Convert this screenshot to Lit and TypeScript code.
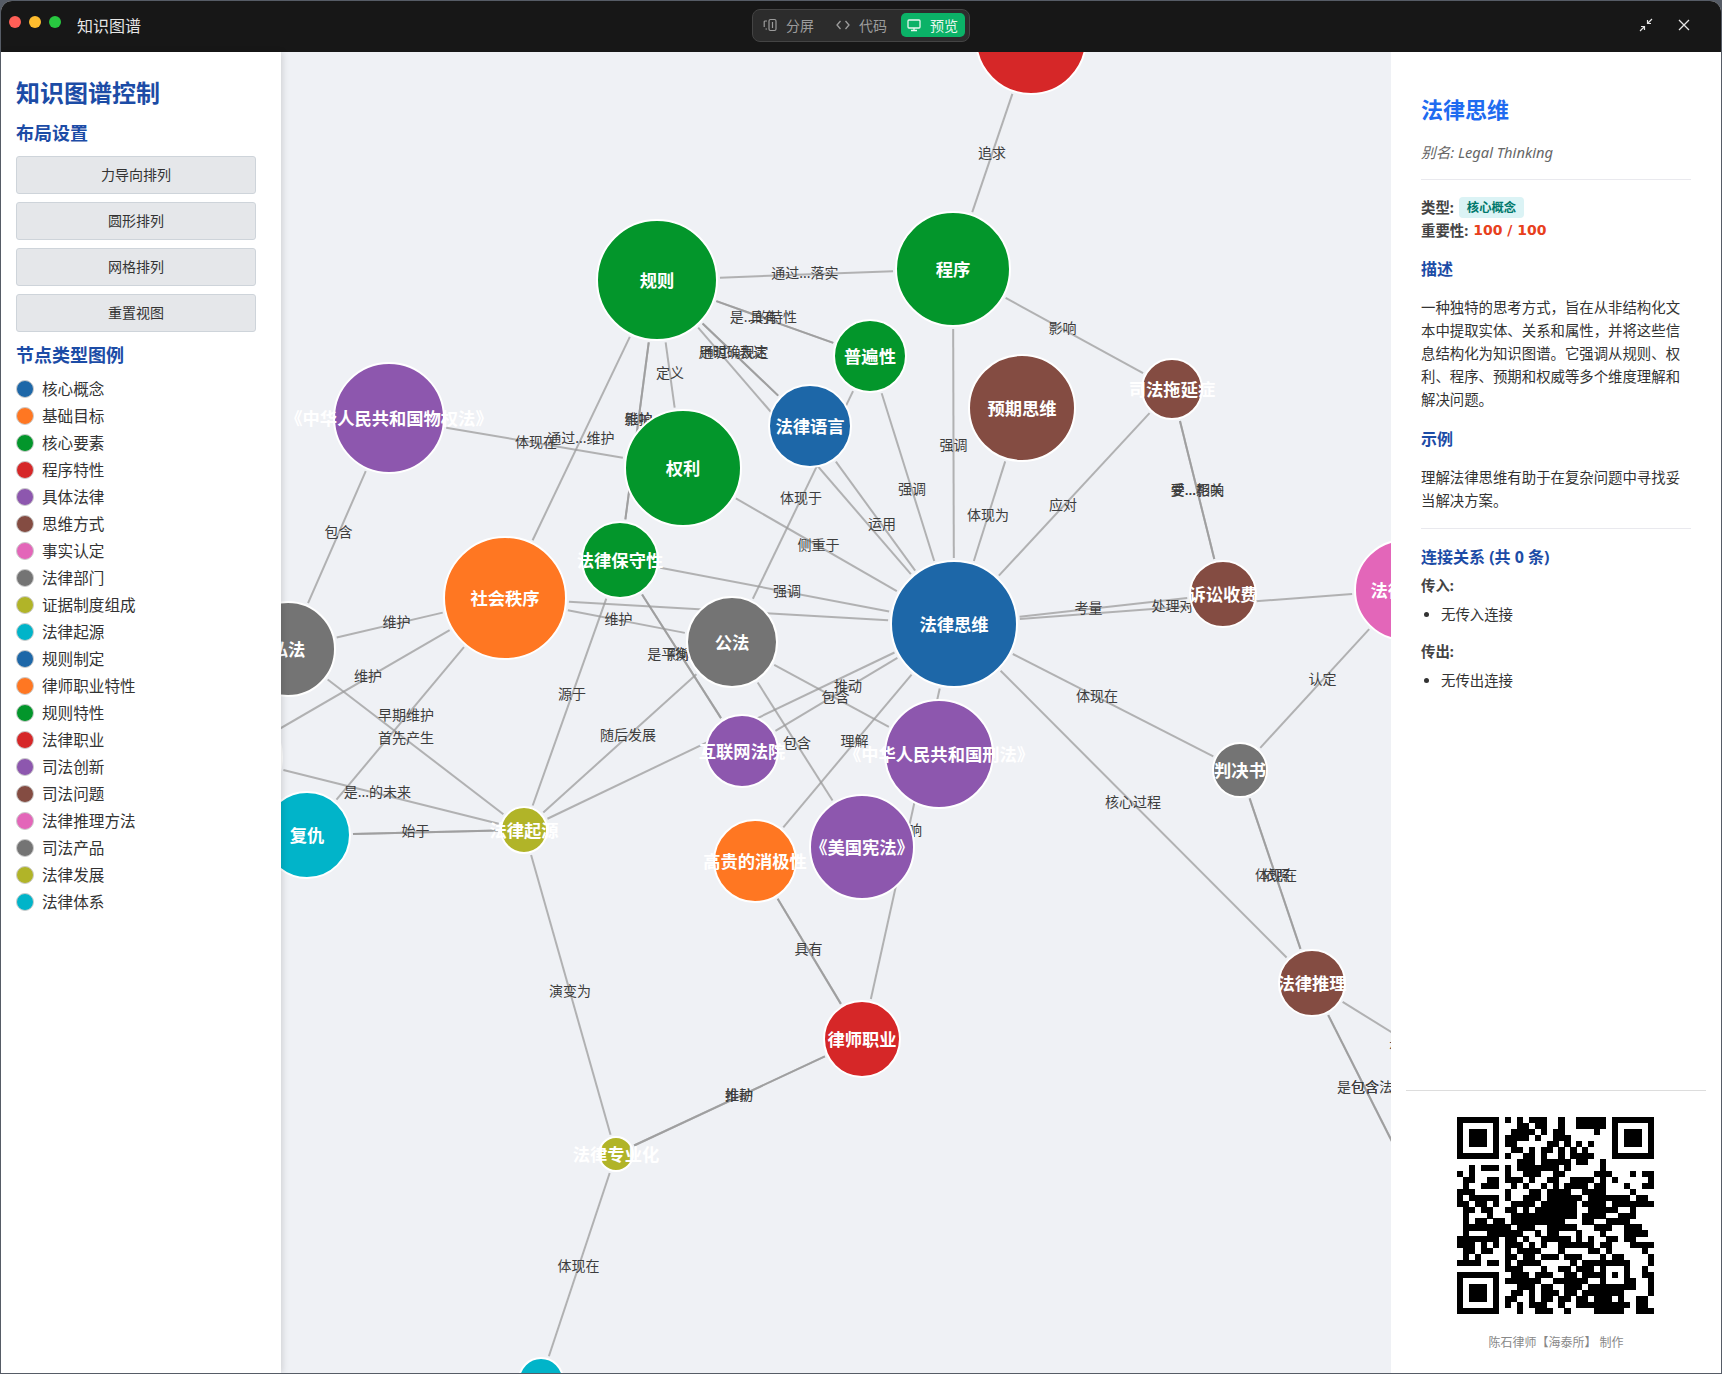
import { LitElement, html, css, svg } from "lit";
import { customElement } from "lit/decorators.js";

const C = {
  blue: "#1d67a8", orange: "#ff7722", green: "#03962b", red: "#d62728", purple: "#8d57ae",
  brown: "#844c42", pink: "#e366b9", gray: "#747474", olive: "#b1b428", cyan: "#01b4c9",
};

const LEGEND: [string, string][] = [
  ["核心概念", C.blue], ["基础目标", C.orange], ["核心要素", C.green], ["程序特性", C.red],
  ["具体法律", C.purple], ["思维方式", C.brown], ["事实认定", C.pink], ["法律部门", C.gray],
  ["证据制度组成", C.olive], ["法律起源", C.cyan], ["规则制定", C.blue], ["律师职业特性", C.orange],
  ["规则特性", C.green], ["法律职业", C.red], ["司法创新", C.purple], ["司法问题", C.brown],
  ["法律推理方法", C.pink], ["司法产品", C.gray], ["法律发展", C.olive], ["法律体系", C.cyan],
];

type N = { x: number; y: number; r: number; c: string; t: string };
const NODES: Record<string, N> = {
  off: { x: 231, y: 757, r: 51, c: C.gray, t: "" },
  top: { x: 1031, y: 39, r: 55, c: C.red, t: "" },
  siwei: { x: 954, y: 624, r: 63, c: C.blue, t: "法律思维" },
  guize: { x: 657, y: 280, r: 60, c: C.green, t: "规则" },
  chengxu: { x: 953, y: 269, r: 57, c: C.green, t: "程序" },
  pubian: { x: 870, y: 356, r: 36, c: C.green, t: "普遍性" },
  yuyan: { x: 810, y: 426, r: 41, c: C.blue, t: "法律语言" },
  quanli: { x: 683, y: 468, r: 58, c: C.green, t: "权利" },
  wuquan: { x: 389, y: 418, r: 55, c: C.purple, t: "《中华人民共和国物权法》" },
  baoshou: { x: 620, y: 560, r: 38, c: C.green, t: "法律保守性" },
  shehui: { x: 505, y: 598, r: 61, c: C.orange, t: "社会秩序" },
  gongfa: { x: 732, y: 642, r: 45, c: C.gray, t: "公法" },
  sifa: { x: 288, y: 649, r: 47, c: C.gray, t: "私法" },
  yuqi: { x: 1022, y: 408, r: 53, c: C.brown, t: "预期思维" },
  tuoyan: { x: 1172, y: 389, r: 30, c: C.brown, t: "司法拖延症" },
  susong: { x: 1223, y: 594, r: 33, c: C.brown, t: "诉讼收费" },
  shishi: { x: 1405, y: 590, r: 50, c: C.pink, t: "法律事实" },
  hulian: { x: 742, y: 751, r: 36, c: C.purple, t: "互联网法院" },
  xingfa: { x: 939, y: 754, r: 54, c: C.purple, t: "《中华人民共和国刑法》" },
  xianfa: { x: 862, y: 847, r: 52, c: C.purple, t: "《美国宪法》" },
  gaogui: { x: 755, y: 861, r: 41, c: C.orange, t: "高贵的消极性" },
  panjue: { x: 1240, y: 770, r: 27, c: C.gray, t: "判决书" },
  qiyuan: { x: 524, y: 830, r: 23, c: C.olive, t: "法律起源" },
  fuchou: { x: 307, y: 835, r: 43, c: C.cyan, t: "复仇" },
  lvshi: { x: 862, y: 1039, r: 38, c: C.red, t: "律师职业" },
  tuili: { x: 1312, y: 983, r: 33, c: C.brown, t: "法律推理" },
  zhuanye: { x: 616, y: 1154, r: 17, c: C.olive, t: "法律专业化" },
  tixi: { x: 541, y: 1380, r: 22, c: C.cyan, t: "" },
  outA: { x: 1506, y: 1103, r: 20, c: C.gray, t: "" },
  outB: { x: 1418, y: 1193, r: 20, c: C.gray, t: "" },
};

const EDGES: [string, string, string][] = [
  ["guize", "chengxu", "通过...落实"], ["chengxu", "top", "追求"],
  ["guize", "pubian", "是...的特性"], ["guize", "pubian", "具有"],
  ["guize", "yuyan", "通过...表达"], ["guize", "yuyan", "用明确规定"],
  ["guize", "siwei", "体现"], ["pubian", "gongfa", "体现于"], ["pubian", "siwei", "强调"],
  ["chengxu", "siwei", "强调"], ["yuqi", "siwei", "体现为"], ["tuoyan", "siwei", "应对"],
  ["chengxu", "tuoyan", "影响"], ["tuoyan", "susong", "受...影响"], ["tuoyan", "susong", "要...相关"],
  ["susong", "siwei", "考量"], ["shishi", "siwei", "处理对象"], ["quanli", "siwei", "侧重于"],
  ["yuyan", "siwei", "运用"], ["guize", "quanli", "定义"], ["guize", "baoshou", "影响"],
  ["guize", "baoshou", "维护"], ["guize", "shehui", "通过...维护"], ["wuquan", "quanli", "体现在"],
  ["wuquan", "sifa", "包含"], ["shehui", "sifa", "维护"], ["shehui", "gongfa", "维护"],
  ["shehui", "siwei", "追求"], ["baoshou", "siwei", "强调"], ["baoshou", "qiyuan", "源于"],
  ["baoshou", "hulian", "是平衡...的"], ["baoshou", "hulian", "影响"], ["shehui", "off", "维护"],
  ["shehui", "fuchou", "早期维护"], ["sifa", "qiyuan", "首先产生"], ["off", "qiyuan", "是...的未来"],
  ["fuchou", "qiyuan", "始于"], ["fuchou", "qiyuan", ""], ["qiyuan", "gongfa", "随后发展"],
  ["qiyuan", "siwei", "包含"], ["hulian", "siwei", "推动"], ["gongfa", "xingfa", "包含"],
  ["gongfa", "xianfa", "包含"], ["siwei", "gaogui", "理解"], ["siwei", "lvshi", "影响"],
  ["gaogui", "lvshi", "具有"], ["gaogui", "lvshi", ""], ["qiyuan", "zhuanye", "演变为"],
  ["lvshi", "zhuanye", "维护"], ["lvshi", "zhuanye", "推动"], ["zhuanye", "tixi", "体现在"],
  ["siwei", "panjue", "体现在"], ["siwei", "tuili", "核心过程"], ["panjue", "shishi", "认定"],
  ["panjue", "tuili", "体现在"], ["panjue", "tuili", "依照"], ["tuili", "outA", "是...的"],
  ["tuili", "outB", "是包含法"], ["tuili", "outB", "包含"],
];

const QR_RUNS = [
  "8 10 12-14 17 20-24",
  "10-11 13-14 17 20-24",
  "9-12 14 16-17 23",
  "8-11 13 16-18",
  "8-9 15-16 18 20 22",
  "9-10 12 14-15 17 19 21",
  "8 11-12 14 17 19-22",
  "10-12 14-18 20-21 24",
  "2 4-6 8 10-16 18 24",
  "0 2 8 11-13 16-17 23-25 29 31-32",
  "1-2 5-6 8-10 12 15-16 19-22 24 26 32",
  "1 4-6 9 11 14 16 18-21 23-24 28 31-32",
  "0-2 8 12-13 15-18 21-24 29",
  "0 2-6 8 11-13 15-20 22-28 30-31",
  "0-1 3-4 6 9-12 14-19 21-24 26-32",
  "1-2 4-5 8-9 11 13-19 22-26 29",
  "1 5 9-19 21-24 27-29",
  "1 3-4 6-7 9-17 21-22 25-28",
  "1-8 10-12 15-19 23-25 28-30",
  "1 5-10 13 15-16 20 24 28-31",
  "0-6 8-9 11 14-18 20 22 25-26 28-29",
  "0-2 4 6 8-10 12 14 17-22 24-25 29-32",
  "1-2 4-5 8 10-13 17 22-23 25 31",
  "1 3 8-9 11-12 14-16 18-20 24 26-27 32",
  "0-3 5-6 8 10-13 19 21-23 32",
  "8-10 14 17-18 20-22 31",
  "9-11 13-15 18-19 21-23 31-32",
  "8-13 16-21 29 32",
  "10-12 14-15 18-20 22-23 29 32",
  "9-10 12 14-16 18-19 21-27 32",
  "8-9 12 14-15 17-18 20-21 23-25 27 30-31",
  "8 10 12-14 17 20-28 30-31",
  "10 13-15 18 23-27 30-32",
];

function qrCells(): [number, number][] {
  const g: boolean[][] = QR_RUNS.map((row) => {
    const cells = new Array(33).fill(false);
    row.split(" ").forEach((tok) => {
      const [a, b] = tok.split("-").map(Number);
      for (let i = a; i <= (b ?? a); i++) cells[i] = true;
    });
    return cells;
  });
  const finder = (ox: number, oy: number) => {
    for (let y = -1; y < 8; y++) for (let x = -1; x < 8; x++) {
      const cx = ox + x, cy = oy + y;
      if (cx < 0 || cy < 0 || cx > 32 || cy > 32) continue;
      const inner = x >= 0 && x <= 6 && y >= 0 && y <= 6;
      const ring = x === 0 || x === 6 || y === 0 || y === 6;
      const core = x >= 2 && x <= 4 && y >= 2 && y <= 4;
      g[cy][cx] = inner && (ring || core);
    }
  };
  finder(0, 0); finder(26, 0); finder(0, 26);
  for (let y = 0; y < 5; y++) for (let x = 0; x < 5; x++) {
    g[24 + y][24 + x] = x === 0 || x === 4 || y === 0 || y === 4 || (x === 2 && y === 2);
  }
  const out: [number, number][] = [];
  g.forEach((row, y) => row.forEach((v, x) => { if (v) out.push([x, y]); }));
  return out;
}

@customElement("app-root")
export class AppRoot extends LitElement {
  static styles = css`
    :host { display: block; height: 1374px; background: #565c66; padding: 1px; box-sizing: border-box;
      font-family: "Noto Sans", "Noto Sans CJK SC", sans-serif; color: #333; overflow: hidden; }
    .window { height: 100%; display: flex; flex-direction: column; border-radius: 11px 11px 0 0; overflow: hidden; background: #fff; }
    .bar { flex: none; height: 51px; background: #171717; display: grid; grid-template-columns: 1fr auto 1fr; align-items: center; color: #e5e5e5; }
    .bar-left { display: flex; align-items: center; padding-left: 8px; padding-bottom: 2px; }
    .light { width: 12px; height: 12px; border-radius: 50%; margin-right: 8px; margin-top: -8px; }
    .title { font-size: 16px; margin-left: 8px; line-height: 24px; }
    .seg { display: flex; align-items: center; height: 31px; padding: 0 4px 0 10px; border: 1px solid #444; background: #2c2c2c; border-radius: 8px; margin-top: -3px; }
    .seg-item { display: flex; align-items: center; gap: 9px; font-size: 14px; color: #9c9c9c; margin-right: 22px; }
    .seg-item.active { color: #e8f7ef; background: #0bb267; border-radius: 5px; height: 24px; padding: 0 7px 0 6px; margin: 0 0 0 -8px; }
    .bar-right { display: flex; justify-content: flex-end; align-items: center; gap: 25px; padding-right: 31px; padding-bottom: 3px; }
    svg.ic { display: block; }
    .main { flex: 1; min-height: 0; display: flex; }
    .side { flex: none; width: 280px; box-sizing: border-box; padding: 24px 15px; background: #fff; box-shadow: 2px 0 6px rgba(0,0,0,.12); position: relative; z-index: 1; }
    .side h1 { margin: 0; font-size: 24px; line-height: 34px; font-weight: 700; color: #1c4ca6; }
    .side h2 { margin: 10px 0 10px; font-size: 18px; line-height: 26px; font-weight: 700; color: #1c4ca6; }
    .btn { display: flex; align-items: center; justify-content: center; width: 240px; height: 38px; box-sizing: border-box; padding-bottom: 2px; margin-bottom: 8px; border: 1px solid #ced4da; border-radius: 3px; background: #e5e7ea; font-size: 14px; color: #333; }
    .side h2.legend-title { margin: 10px 0 7px; }
    .leg { display: flex; align-items: center; height: 27px; gap: 8px; font-size: 15.6px; color: #333; }
    .dot { width: 18px; height: 18px; border-radius: 50%; border: 1px solid #ccc; box-sizing: border-box; flex: none; }
    .graph { flex: 1; min-width: 0; background: #eff1f5; position: relative; overflow: hidden; }
    .graph svg { display: block; width: 100%; height: 100%; }
    .edge { stroke: #999; stroke-opacity: .72; stroke-width: 2; }
    .elabel { font-size: 14px; fill: #3d3d3d; text-anchor: middle; dominant-baseline: central; }
    .node { stroke: #fff; stroke-width: 2; }
    .nlabel { font-size: 17.3px; font-weight: 700; fill: #fff; text-anchor: middle; dominant-baseline: central; }
    .panel { flex: none; width: 330px; box-sizing: border-box; background: #fff; display: flex; flex-direction: column; position: relative; z-index: 1; }
    .detail { flex: 1; padding: 41px 30px 0; font-size: 14.4px; }
    .detail h3 { margin: 0; font-size: 22px; line-height: 32px; font-weight: 700; color: #1f6bf0; }
    .alias { margin: 16px 0 0; font-style: italic; font-size: 14.7px; line-height: 22px; color: #666; }
    .rule { border: 0; border-top: 1px solid #e9e9ee; margin: 16px 0 16px; }
    .kv { font-size: 14.4px; line-height: 23px; color: #444; font-weight: 700; display: flex; align-items: center; gap: 5px; }
    .badge { background: #dbf3f5; color: #00786b; font-size: 12.3px; font-weight: 700; padding: 0 8px; height: 21px; line-height: 21px; border-radius: 4px; }
    .score { color: #e8401c; font-family: "DejaVu Sans", sans-serif; font-size: 14px; font-weight: 700; }
    .detail h4 { margin: 16px 0 15px; font-size: 16px; line-height: 24px; font-weight: 700; color: #1c4ca6; }
    .detail .kv + h4 { margin-top: 15px; }
    .detail h4.links { margin: 15px 0 6px; }
    .detail p { margin: 0; line-height: 23px; color: #333; }
    .sub { margin: 0; font-weight: 700; line-height: 22px; color: #444; }
    .detail ul { margin: 6px 0 14px; padding-left: 20px; line-height: 24px; color: #333; }
    .foot { flex: none; margin: 0 15px; border-top: 1px solid #ddd; height: 283px; box-sizing: border-box; display: flex; flex-direction: column; align-items: center; padding: 26px 2px 0 0; }
    .foot svg { display: block; width: 197px; height: 197px; }
    .cap { margin: 20px 0 0 2px; font-size: 12px; line-height: 18px; color: #888; }
  `;

  private edge(e: [string, string, string]) {
    const a = NODES[e[0]], b = NODES[e[1]];
    const d = Math.hypot(b.x - a.x, b.y - a.y) || 1;
    const ux = (b.x - a.x) / d, uy = (b.y - a.y) / d;
    return svg`<line class="edge" x1=${a.x + ux * (a.r + 3)} y1=${a.y + uy * (a.r + 3)} x2=${b.x - ux * (b.r + 3)} y2=${b.y - uy * (b.r + 3)}></line>`;
  }

  private label(e: [string, string, string]) {
    if (!e[2]) return null;
    const a = NODES[e[0]], b = NODES[e[1]];
    return svg`<text class="elabel" x=${(a.x + b.x) / 2} y=${(a.y + b.y) / 2 - 2}>${e[2]}</text>`;
  }

  render() {
    const ns = Object.values(NODES);
    return html`<div class="window">
      <div class="bar">
        <div class="bar-left">
          <span class="light" style="background:#ff5f57"></span>
          <span class="light" style="background:#febc2e"></span>
          <span class="light" style="background:#28c840"></span>
          <span class="title">知识图谱</span>
        </div>
        <div class="seg">
          <div class="seg-item"><svg class="ic" width="14" height="14" viewBox="0 0 14 14" fill="none" stroke="#9c9c9c" stroke-width="1.2"><rect x="6" y="1.5" width="7" height="11" rx="1.5"/><path d="M9.5 4v6M4 3H2.2c-.6 0-1 .4-1 1v5M4 11H2.5"/></svg>分屏</div>
          <div class="seg-item"><svg class="ic" width="14" height="14" viewBox="0 0 14 14" fill="none" stroke="#9c9c9c" stroke-width="1.3"><path d="M4.5 3 1 7l3.500 4M9.500 3 13 7l-3.500 4"/></svg>代码</div>
          <div class="seg-item active"><svg class="ic" width="14" height="14" viewBox="0 0 14 14" fill="none" stroke="#e8f7ef" stroke-width="1.3"><rect x="1" y="2" width="12" height="8" rx="1"/><path d="M7 10v2.500M4 12.500h6"/></svg>预览</div>
        </div>
        <div class="bar-right">
          <svg class="ic" width="14" height="14" viewBox="0 0 14 14" fill="none" stroke="#e5e5e5" stroke-width="1.200"><path d="M13 1 8.500 5.500M8.500 2v3.500H12M1 13l4.500-4.500M5.500 12V8.500H2"/></svg>
          <svg class="ic" width="12" height="12" viewBox="0 0 12 12" fill="none" stroke="#e5e5e5" stroke-width="1.300"><path d="M1 1l10 10M11 1 1 11"/></svg>
        </div>
      </div>
      <div class="main">
        <aside class="side">
          <h1>知识图谱控制</h1>
          <h2>布局设置</h2>
          ${["力导向排列", "圆形排列", "网格排列", "重置视图"].map((b) => html`<div class="btn">${b}</div>`)}
          <h2 class="legend-title">节点类型图例</h2>
          ${LEGEND.map(([t, c]) => html`<div class="leg"><span class="dot" style="background:${c}"></span>${t}</div>`)}
        </aside>
        <div class="graph">
          <svg viewBox="281 52 1110 1321" preserveAspectRatio="xMinYMin slice">
            ${EDGES.map((e) => this.edge(e))}
            ${EDGES.map((e) => this.label(e))}
            ${ns.map((n) => svg`<circle class="node" cx=${n.x} cy=${n.y} r=${n.r} fill=${n.c}></circle>`)}
            ${ns.map((n) => svg`<text class="nlabel" x=${n.x} y=${n.y}>${n.t}</text>`)}
          </svg>
        </div>
        <aside class="panel">
          <div class="detail">
            <h3>法律思维</h3>
            <div class="alias">别名: Legal Thinking</div>
            <hr class="rule" />
            <div class="kv">类型: <span class="badge">核心概念</span></div>
            <div class="kv">重要性: <span class="score">100 / 100</span></div>
            <h4>描述</h4>
            <p>一种独特的思考方式，旨在从非结构化文本中提取实体、关系和属性，并将这些信息结构化为知识图谱。它强调从规则、权利、程序、预期和权威等多个维度理解和解决问题。</p>
            <h4>示例</h4>
            <p>理解法律思维有助于在复杂问题中寻找妥当解决方案。</p>
            <hr class="rule" />
            <h4 class="links">连接关系 (共 0 条)</h4>
            <div class="sub">传入:</div>
            <ul><li>无传入连接</li></ul>
            <div class="sub">传出:</div>
            <ul><li>无传出连接</li></ul>
          </div>
          <div class="foot">
            <svg viewBox="0 0 33 33" shape-rendering="crispEdges">
              ${qrCells().map(([x, y]) => svg`<rect x=${x} y=${y} width="1.02" height="1.02" fill="#000"></rect>`)}
            </svg>
            <div class="cap">陈石律师【海泰所】 制作</div>
          </div>
        </aside>
      </div>
    </div>`;
  }
}
